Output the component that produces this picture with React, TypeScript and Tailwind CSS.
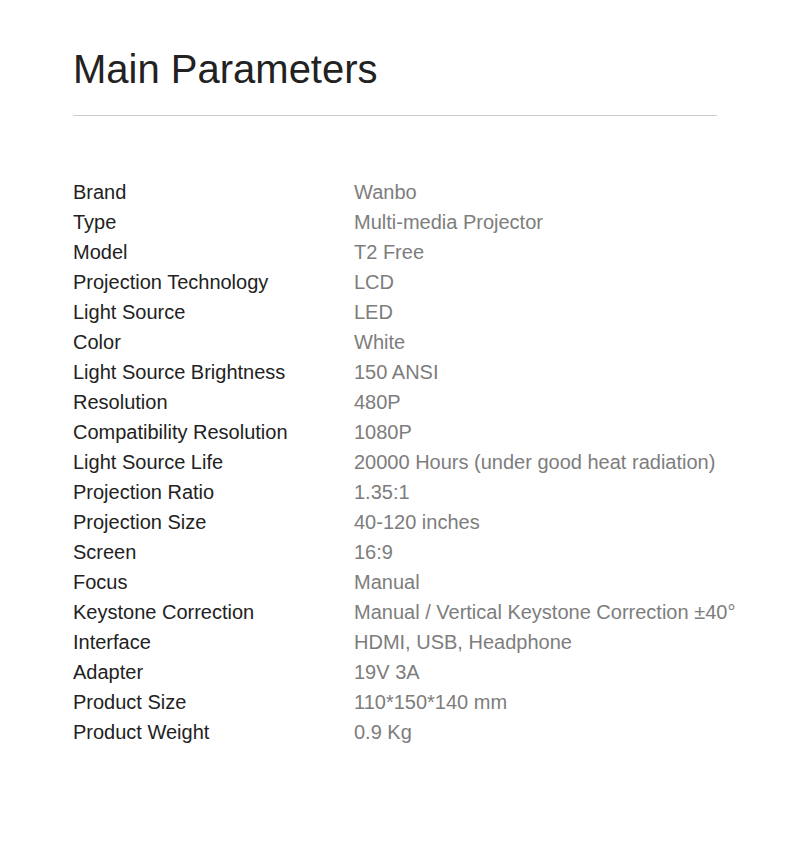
import React from 'react';

const params: [string, string][] = [
  ['Brand', 'Wanbo'],
  ['Type', 'Multi-media Projector'],
  ['Model', 'T2 Free'],
  ['Projection Technology', 'LCD'],
  ['Light Source', 'LED'],
  ['Color', 'White'],
  ['Light Source Brightness', '150 ANSI'],
  ['Resolution', '480P'],
  ['Compatibility Resolution', '1080P'],
  ['Light Source Life', '20000 Hours (under good heat radiation)'],
  ['Projection Ratio', '1.35:1'],
  ['Projection Size', '40-120 inches'],
  ['Screen', '16:9'],
  ['Focus', 'Manual'],
  ['Keystone Correction', 'Manual / Vertical Keystone Correction ±40°'],
  ['Interface', 'HDMI, USB, Headphone'],
  ['Adapter', '19V 3A'],
  ['Product Size', '110*150*140 mm'],
  ['Product Weight', '0.9 Kg'],
];

const App: React.FC = () => {
  return (
    <div
      className="w-[790px] h-[864px] bg-white pt-[49px] pl-[73px] pr-[73px]"
      style={{ fontFamily: '"Liberation Sans", Arial, sans-serif' }}
    >
      <h1 className="text-[40px] leading-[40px] text-[#222222]">Main Parameters</h1>
      <div className="mt-[26px] h-px bg-[#cccccc] w-[644px]" />
      <div className="mt-[61px] flex flex-col">
        {params.map(([label, value]) => (
          <div key={label} className="flex text-[20px] leading-[30px] whitespace-nowrap">
            <div className="w-[281px] shrink-0 text-[#222222]">{label}</div>
            <div className="shrink-0 text-[#7d7d7d]">{value}</div>
          </div>
        ))}
      </div>
    </div>
  );
};

export default App;
